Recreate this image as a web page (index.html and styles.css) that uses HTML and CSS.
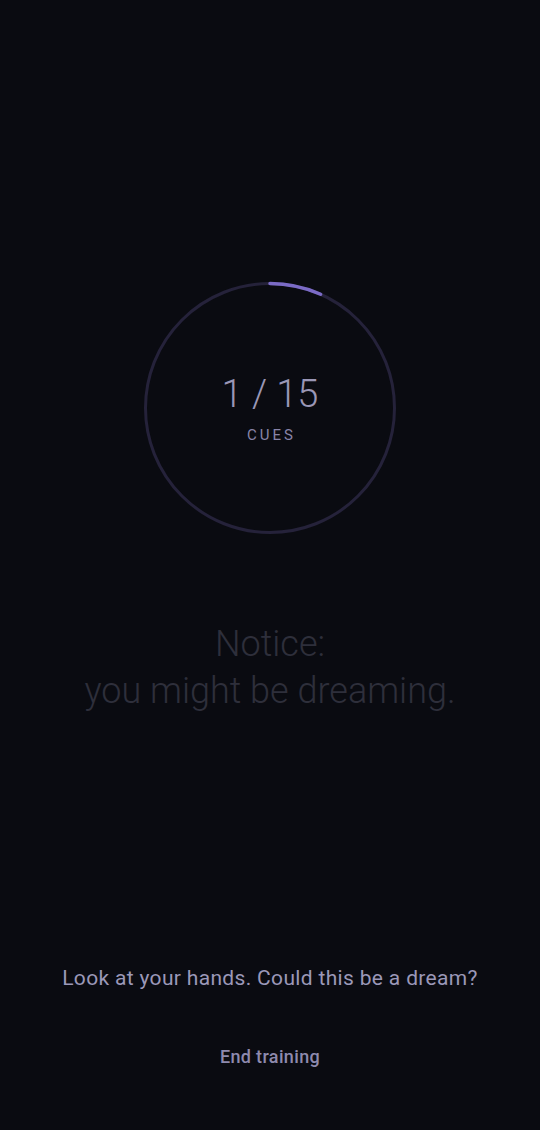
FILE: index.html
```html
<!DOCTYPE html>
<html>
<head>
<meta charset="utf-8">
<link rel="stylesheet" href="styles.css">
</head>
<body>
<main class="screen">
  <section class="ring-wrap">
    <svg class="ring" width="256" height="256" viewBox="0 0 256 256">
      <circle cx="128" cy="128" r="124.5" fill="none" stroke="#25223a" stroke-width="3"/>
      <circle cx="128" cy="128" r="124.5" fill="none" stroke="#7b6bc6" stroke-width="3.5" stroke-linecap="round" stroke-dasharray="52.15 800" transform="rotate(-90 128 128)"/>
    </svg>
    <div class="ring-label">
      <div class="count">1 / 15</div>
      <div class="unit">CUES</div>
    </div>
  </section>
  <h1 class="notice">Notice:<br>you might be dreaming.</h1>
  <p class="prompt">Look at your hands. Could this be a dream?</p>
  <button class="end">End training</button>
</main>
</body>
</html>
```
FILE: styles.css
```css
html, body {
  margin: 0;
  padding: 0;
  background: #0a0b11;
}
body {
  width: 540px;
  height: 1130px;
  font-family: Roboto, "Noto Sans", sans-serif;
}
.screen {
  display: flex;
  flex-direction: column;
  align-items: center;
  padding-top: 280px;
}
.ring-wrap {
  position: relative;
  width: 256px;
  height: 256px;
}
.ring {
  display: block;
}
.ring-label {
  position: absolute;
  inset: 0;
  display: flex;
  flex-direction: column;
  align-items: center;
  justify-content: center;
}
.count {
  font-size: 38px;
  font-weight: 300;
  color: #9a97b6;
  line-height: 1;
  margin-top: 2px;
}
.unit {
  margin-top: 15px;
  font-size: 15px;
  letter-spacing: 3px;
  margin-right: -3px;
  color: #8884a8;
  line-height: 1;
}
.notice {
  margin: 85px 0 0;
  font-size: 36px;
  font-weight: 300;
  line-height: 47px;
  color: #2e2f3b;
  text-align: center;
}
.prompt {
  margin: 249px 0 0;
  font-size: 21px;
  letter-spacing: 0.33px;
  line-height: 28px;
  color: #9b98b8;
  text-align: center;
}
.end {
  margin-top: 46px;
  background: none;
  border: none;
  padding: 8px 16px;
  font-family: Roboto, sans-serif;
  font-size: 18px;
  letter-spacing: 0.35px;
  font-weight: 500;
  color: #8e8aae;
}
```
